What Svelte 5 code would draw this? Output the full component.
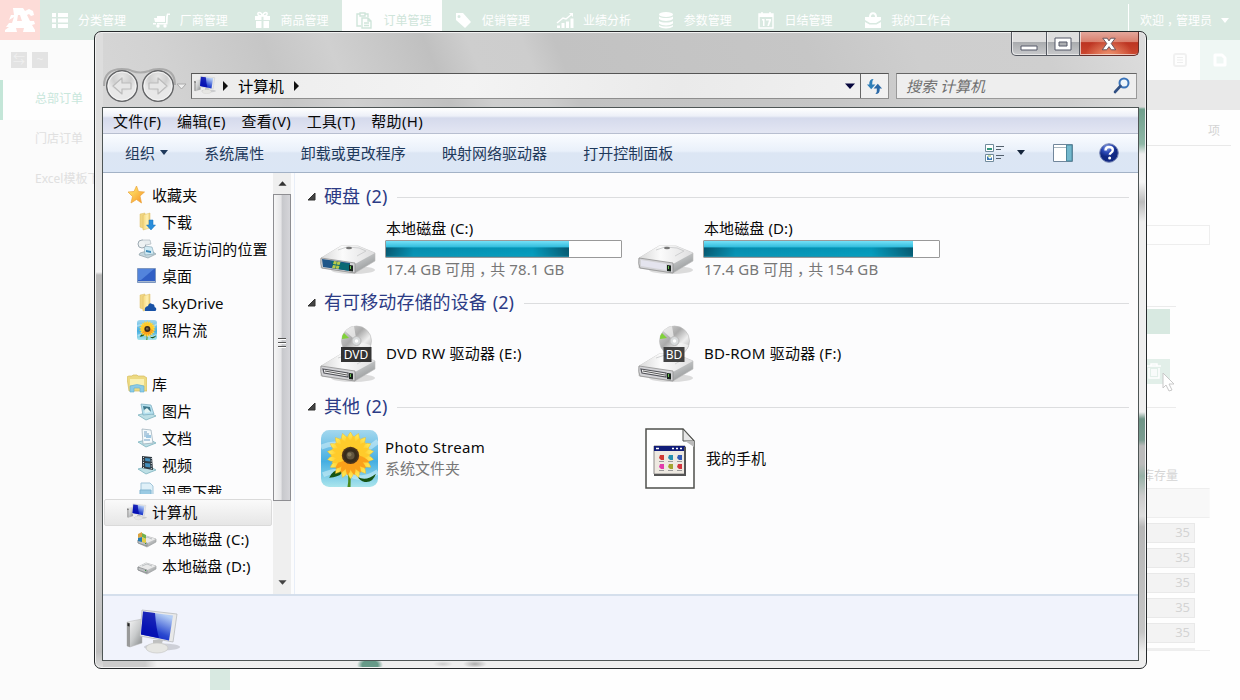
<script>
  const nav = [
    { label: '分类管理', icon: 'list' },
    { label: '厂商管理', icon: 'cart' },
    { label: '商品管理', icon: 'gift' },
    { label: '订单管理', icon: 'paste', active: true },
    { label: '促销管理', icon: 'tag' },
    { label: '业绩分析', icon: 'chart' },
    { label: '参数管理', icon: 'data' },
    { label: '日结管理', icon: 'cal' },
    { label: '我的工作台', icon: 'case', wide: true }
  ];
  const menus = ['文件(F)', '编辑(E)', '查看(V)', '工具(T)', '帮助(H)'];
  const tools = ['系统属性', '卸载或更改程序', '映射网络驱动器', '打开控制面板'];
  const tree = [
    { label: '收藏夹', icon: 'star', root: true },
    { label: '下载', icon: 'download' },
    { label: '最近访问的位置', icon: 'recent' },
    { label: '桌面', icon: 'desktop' },
    { label: 'SkyDrive', icon: 'sky' },
    { label: '照片流', icon: 'flower' },
    { label: '', icon: '' },
    { label: '库', icon: 'library', root: true },
    { label: '图片', icon: 'pictures' },
    { label: '文档', icon: 'docs' },
    { label: '视频', icon: 'video' },
    { label: '迅雷下载', icon: 'thunder' }
  ];
  const lower = [
    { label: '本地磁盘 (C:)', icon: 'diskc' },
    { label: '本地磁盘 (D:)', icon: 'diskd' }
  ];
  const petals = Array.from({ length: 18 }, (_, i) => i * 20);
  const qty = [35, 35, 35, 35, 35];
</script>

{#snippet navIcon(name)}
  <svg class="nav-icon" width="18" height="18" viewBox="0 0 18 18" fill="currentColor">
    {#if name === 'list'}
      <path d="M1 2h4v4H1zM7 2h10v4H7zM1 7.500h4v4H1zM7 7.500h10v4H7zM1 13h4v4H1zM7 13h10v4H7z" />
    {:else if name === 'cart'}
      <path d="M17 2.500h-3L13 6v6H3v1.500h11.500L15 4h2zM4 5h8v6H4zM1 7h3v4H2zM0 12h4v1.500H0z" /><circle cx="5" cy="15" r="1.700" /><circle cx="12" cy="15" r="1.700" />
    {:else if name === 'gift'}
      <path d="M1 5h6.500v4H1zM9.500 5H16v4H9.500zM2 10h5.500v7H2zM9.500 10H15v7H9.500z" /><path d="M8.500 5C7 0 3 1 4 3.500 4.500 5 7 5 8.500 5c1.500 0 4 0 4.500-1.500C14 1 10 0 8.500 5" fill="none" stroke="currentColor" stroke-width="1.500" />
    {:else if name === 'paste'}
      <path d="M6 15H2V3h3m5 0h3v3M5 2h5v3H5zM7 7h6l3 3v7H7zM13 7v3h3M9 12h5M9 14.500h5" fill="none" stroke="currentColor" stroke-width="1.400" />
    {:else if name === 'tag'}
      <path fill-rule="evenodd" d="M1 2v7l9 8 6-6L8 2zM4 4a1.500 1.500 0 1 1 0 3 1.500 1.500 0 0 1 0-3z" />
    {:else if name === 'chart'}
      <path d="M1 14.500h3V17H1zM5.500 12h3v5h-3zM10 10.500h3V17h-3zM14.500 7.500h3V17h-3z" /><path d="M1 12l6-5 3 1 6-5" fill="none" stroke="currentColor" stroke-width="1.500" /><path d="M13 2h4v4z" />
    {:else if name === 'data'}
      <ellipse cx="9" cy="3.500" rx="7" ry="2.500" /><path d="M2 5.500c3 2 11 2 14 0v2.500c-3 2.500-11 2.500-14 0zM2 10c3 2 11 2 14 0v2.500c-3 2.500-11 2.500-14 0zM2 14c3 2 11 2 14 0v1.500c-3 2.500-11 2.500-14 0z" />
    {:else if name === 'cal'}
      <path d="M2 3h14v14H2zM5 1v4M13 1v4" fill="none" stroke="currentColor" stroke-width="1.400" /><path d="M2 3h14v3H2zM5 8h2.500v7H6v-5.500H5zM9 8h5v1.500L12 15h-1.700L12 9.500H9z" />
    {:else}
      <path d="M1 6h16v3l-5 3H6L1 9zM1 11l4.500 2.500h7L17 11v6H1z" /><path d="M6 6c0-5 6-5 6 0" fill="none" stroke="currentColor" stroke-width="2" />
    {/if}
  </svg>
{/snippet}

{#snippet flower(size)}
  <svg width={size} height={size} viewBox="0 0 56 56">
    <rect width="56" height="56" rx="8" fill="url(#sky)" />
    <path d="M0 17Q15 10 27 18T56 11M2 44q15-7 27 0t27-3" fill="none" stroke="#d9f3fa" stroke-width="5" opacity=".5" />
    <path d="M25 38q3 9 1 18h3q1-10-1-19z" fill="#4b8a1d" />
    <path d="M21 38q-10 1-13 9 9-1 12-4zM36 46q8 5 18-3-3 9-11 8-5-1-7-5z" fill="#165414" />
    <g transform="translate(29 25)">
      {#each petals as a}
        <path transform="rotate({a})" d="M-3-7Q-5-18 0-23 4-18 4-7z" fill="url(#petal)" stroke="#f3b21c" stroke-width=".4" />
      {/each}
      {#each petals as a}
        <path transform="rotate({a + 9}) scale(.86)" d="M-3-7Q-4-17 0-23 4-17 4-7z" fill={a > 90 && a < 240 ? '#fba01a' : '#ffcb2b'} />
      {/each}
      <circle r="8.500" fill="#51351b" /><circle r="7" fill="#382d1c" /><circle r="4" fill="#625640" /><circle cx="-1" cy="-1" r="2" fill="#857959" />
    </g>
  </svg>
{/snippet}

{#snippet computer(w, h)}
  <svg width={w} height={h} viewBox="0 0 54 46">
    <ellipse cx="36" cy="38" rx="18" ry="3.500" fill="#8d9096" opacity=".35" />
    <path d="M1 13l15-3v24L4 38l-3-1z" fill="url(#silver)" stroke="#b7b7b7" stroke-width=".5" />
    <path d="M1 13l3 1v24l-3-1z" fill="#9a9a9a" /><path d="M1.500 14l2 .5v3l-2-.5z" fill="#222" />
    <path d="M27 31h10l-2 7h-8z" fill="#bfc0c0" />
    <ellipse cx="31" cy="39" rx="11" ry="5" fill="#e6e6e3" stroke="#c7c7c4" stroke-width=".7" />
    <path d="M16 1l35 4-4 28-33-6z" fill="#e9e9e9" stroke="#b9bbbe" stroke-width=".8" />
    <path d="M17 2.500l30 4-4 25-28-6z" fill="url(#screen)" />
    <path d="M17 2.500l12 1.600q1 15 4 25L15 25.500z" fill="#0008ad" opacity=".8" />
  </svg>
{/snippet}

{#snippet drive(kind)}
  <svg width="58" height="62" viewBox="0 0 58 62">
    <ellipse cx="34" cy="55" rx="22" ry="4" fill="#777" opacity=".25" />
    {#if kind === 'DVD' || kind === 'BD'}
      <circle cx="37.500" cy="18" r="15" fill="url(#disc)" stroke="#bbb" stroke-width=".6" />
      <path d="M37.500 18L26 8q4-4 9-5zM37.500 18l14 4q-2 6-6 8z" fill="#f5f5f5" opacity=".7" />
      <path d="M30 15l-7 1q0-4 2-6z" fill="#80d239" />
      <circle cx="37.500" cy="18" r="4.500" fill="#d9dcdd" stroke="#bbb" /><circle cx="37.500" cy="18" r="1.800" fill="#fff" />
    {/if}
    <path d="M2 43l20-12h17l17 7v8L36 58 2 53z" fill="url(#silver)" stroke="#bcbcbc" stroke-width=".6" />
    <path d="M2 43l20-12h17l17 7-20 11z" fill="url(#toplight)" />
    <path d="M19 35l9-3 12 1 7 3-9 5" fill="none" stroke="#c7c8c9" stroke-width=".8" /><ellipse cx="30" cy="33" rx="3" ry="1.200" fill="#777" />
    <path d="M2 43l34 5v10L3 53q-2-4-1-10z" fill="#d3d3d6" stroke="#909090" stroke-width=".8" />
    {#if kind === 'C'}
      <path d="M3 44l28 4v8L4 52z" fill="#205688" /><path d="M12 46l19 3v7l-17-3z" fill="#0a6974" /><path d="M15 46l3 .5-1 3-3-.5zM18.500 46.500l3 .5-1 3-3-.5zM14 50l3 .5-1 3-3-.5zM17.500 50.500l3 .5-1 3-3-.5z" fill="#b9cb4a" />
    {:else if kind === 'D'}
      <path d="M4 45l25 4v6L4 51z" fill="#e4e4ee" />
    {:else}
      <path d="M4 46l25 4v4L5 50z" fill="#f5f5f5" stroke="#53545a" stroke-width="1.200" /><path d="M6 48l22 4" stroke="#555" />
    {/if}
    <path d="M30 50l4 .5v6l-4-.5z" fill="#18221c" /><path d="M31.500 51v3" stroke="#63bc4d" />
    {#if kind === 'DVD'}
      <rect x="22" y="24" width="30.500" height="15" fill="#252525" opacity=".93" /><text x="37" y="36" text-anchor="middle" font-size="12" fill="#fff">DVD</text>
    {:else if kind === 'BD'}
      <rect x="26.500" y="24" width="21" height="15" fill="#353535" opacity=".93" /><text x="37" y="36" text-anchor="middle" font-size="12" fill="#fff">BD</text>
    {/if}
  </svg>
{/snippet}

{#snippet treeIcon(name)}
  {#if name === 'flower'}
    {@render flower(20)}
  {:else if name}
    <svg width="20" height="20" viewBox="0 0 20 20">
      {#if name === 'star'}
        <path d="M9.500 1l2 5.500 6 .5-4.500 4 1.500 7-5-3.500L4 18l1.500-6.500L1 7l6-.5z" fill="url(#gold)" stroke="#eba33b" stroke-width=".7" />
      {:else if name === 'download' || name === 'sky'}
        <path d="M3 2l5-1v16l-5-2z" fill="#f0d581" stroke="#dcbf66" stroke-width=".5" /><path d="M6 3l7-2v15l-7 2z" fill="url(#folder)" stroke="#dcbf66" stroke-width=".5" />
        {#if name === 'download'}<path d="M12 8h4v5h2.500l-4.500 5-4.500-5H12z" fill="#298ddb" stroke="#1673b8" stroke-width=".5" />
        {:else}<path d="M8 18q-1-4 3-5 1-4 4-2 3 0 2.500 3 3 1 1 4z" fill="#1952a6" />{/if}
      {:else if name === 'recent'}
        <path d="M3 14l10-3 6 4-8 4-9-3z" fill="#c4d5dc" stroke="#82939c" stroke-width=".6" /><path d="M7 7l8 1 2 7-9 1z" fill="#d1eaf3" stroke="#809faf" stroke-width=".6" /><circle cx="5" cy="5" r="4" fill="#eef2f3" stroke="#9ca9b2" /><path d="M5 1h8l1 4-5 1" fill="#e8edef" stroke="#95a3aa" stroke-width=".5" /><path d="M9 11l5 1v2l-5-1z" fill="#3c89b9" />
      {:else if name === 'desktop'}
        <path d="M.5 2.500h18v14H.5z" fill="#315fc5" stroke="#7590b7" stroke-width=".8" /><path d="M1 3h16L4 14H1z" fill="#6698e8" opacity=".65" /><path d="M1 15h17v1H1z" fill="#a8b9d0" />
      {:else if name === 'library'}
        <path d="M0 4q0-2 2-2h3l1-1h4l1 1h6l3 2v13H2z" fill="#edda83" stroke="#d5ba5b" stroke-width=".7" /><path d="M3 5h14v6H3z" fill="#faf1b3" /><path d="M3 12q7-3 14 0v6h-4v-4H7v4H3z" fill="#8ccae6" stroke="#60afd2" stroke-width=".6" />
      {:else if name === 'diskc' || name === 'diskd'}
        <path d="M1 11l8-4 10 3v3l-9 5-9-4z" fill="url(#silver)" stroke="#a0a3a5" stroke-width=".7" /><path d="M1 11l8-4 10 3-9 4z" fill="#e9e9e9" /><path d="M1 11l9 3v3l-9-3z" fill="#bec0c1" stroke="#777b7d" stroke-width=".6" /><path d="M5 10l5-2 5 2" fill="none" stroke="#bdc1c3" /><path d="M8 14l1 .3v1l-1-.3z" fill="#2a8b36" />
        {#if name === 'diskc'}<path d="M1 5l4-2v5l-4 1z" fill="#dba33e" /><path d="M5 4l4 2v4L5 8z" fill="#72b14d" /><path d="M1 9l4-1v5l-4-1z" fill="#267bae" /><path d="M5 8l4 2v4l-4-1z" fill="#e2cc47" />{/if}
      {:else if name === 'thunder'}
        <path d="M4 1h9l3 3v15H4z" fill="#dff0f8" stroke="#a1c5d9" /><path d="M3 8h11v11H3z" fill="#9acae3" stroke="#80b4d0" /><path d="M6 13h8v6H6z" fill="#b6dded" />
      {:else}
        <path d="M1 14l11-3 7 4-10 4z" fill="#bddfe5" stroke="#70abb7" stroke-width=".7" />
        {#if name === 'pictures'}
          <path d="M4 3l10 1 3 9-11 1z" fill="#b6e1ef" stroke="#79a9bb" stroke-width=".7" /><path d="M6 5l7 1 1 5-7-1z" fill="#3d788c" /><path d="M7 9l3-2 4 4-6 1z" fill="#e1f4f4" />
        {:else if name === 'docs'}
          <path d="M5 1l9 1 2 13-10 1z" fill="#f5fafc" stroke="#95a9b4" stroke-width=".7" /><path d="M7 4h3M7 6h5M7 8h2M7 12h6" stroke="#70a0c4" /><path d="M9 7h5v3H9z" fill="#9dc6e1" />
        {:else}
          <path d="M5 1l10 1 1 13-11-2z" fill="#303b43" /><path d="M8 3l5 .5.3 3-5-.5zM8 8l5 .5.3 4-5-.7z" fill="#438ebb" /><path d="M6.500 2v11M14.300 3v11" stroke="#d5dce0" stroke-dasharray="1 1.500" />
        {/if}
      {/if}
    </svg>
  {/if}
{/snippet}

{#snippet heading(text)}
  <div class="heading"><svg width="9" height="9" viewBox="0 0 9 9"><path d="M8 1v7H1z" fill="#444" stroke="#303030" /></svg><span>{text}</span><i></i></div>
{/snippet}

<svg class="defs" width="0" height="0">
  <defs>
    <linearGradient id="silver" x1="0" y1="0" x2="1" y2="1"><stop stop-color="#fafafa" /><stop offset=".55" stop-color="#c9cbcc" /><stop offset="1" stop-color="#858889" /></linearGradient>
    <linearGradient id="toplight"><stop stop-color="#d8d8d8" /><stop offset=".4" stop-color="#fbfbfb" /><stop offset="1" stop-color="#dededf" /></linearGradient>
    <linearGradient id="disc" x1="0" y1="0" x2="1" y2="1"><stop stop-color="#ddd" /><stop offset=".4" stop-color="#aaa" /><stop offset=".65" stop-color="#eee" /><stop offset="1" stop-color="#a0a0a0" /></linearGradient>
    <linearGradient id="screen" x1="0" y1="1" x2=".5" y2="0"><stop stop-color="#000fc0" /><stop offset=".45" stop-color="#2a49d0" /><stop offset="1" stop-color="#b4cdf5" /></linearGradient>
    <linearGradient id="sky" x1="0" y1="0" x2="0" y2="1"><stop stop-color="#a4d8ee" /><stop offset=".55" stop-color="#45aee2" /><stop offset="1" stop-color="#aae5ec" /></linearGradient>
    <linearGradient id="petal" x1="0" y1="0" x2="0" y2="1"><stop stop-color="#fff15a" /><stop offset="1" stop-color="#ffad16" /></linearGradient>
    <linearGradient id="gold" x1="0" y1="0" x2="1" y2="1"><stop stop-color="#fff477" /><stop offset="1" stop-color="#f88e21" /></linearGradient>
    <linearGradient id="folder"><stop stop-color="#f5d77c" /><stop offset=".6" stop-color="#fff1b2" /><stop offset="1" stop-color="#ebcd78" /></linearGradient>
    <radialGradient id="help" cx=".4" cy=".2"><stop stop-color="#8fa5e4" /><stop offset=".55" stop-color="#2d4bb8" /><stop offset="1" stop-color="#102883" /></radialGradient>
    <radialGradient id="orb" cx=".5" cy=".2"><stop stop-color="#e6e6e6" /><stop offset=".6" stop-color="#cfcfcf" /><stop offset="1" stop-color="#e8e8e8" /></radialGradient>
  </defs>
</svg>

<div class="page">
  <header class="topnav">
    <div class="logo"><svg width="30" height="26" viewBox="0 0 30 26"><path fill="#fff" fill-rule="evenodd" d="M8 1h10l2 3 4-2 4 2 1 4-3 1-2-2-2 1 3 6h4l1 3-3 1 3 5v2H18l1-4h-8l1 4H0v-2l4-3H1l3-4h3l2-6-5 3 2-5h3zM13 8l-1 6h5l-2-6z" /></svg></div>
    {#each nav as item}
      <div class="nav-item" class:active={item.active} class:wide={item.wide}>{@render navIcon(item.icon)}<span>{item.label}</span></div>
    {/each}
    <div class="welcome"><span>欢迎<em>，</em>管理员</span><i></i></div>
  </header>
  <div class="page-body">
    <aside class="page-side">
      <div class="mini"><b>⇆</b><b>~</b></div>
      <div class="side-link current">总部订单</div>
      <div class="side-link">门店订单</div>
      <div class="side-link">Excel模板下载</div>
    </aside>
    <main class="page-main">
      <div class="tiles">
        <div><svg width="14" height="14" viewBox="0 0 14 14"><rect x="1" y="1" width="12" height="12" rx="2" fill="none" stroke="#f1f1f1" stroke-width="2" /><path d="M4 4.500h6M4 7h6M4 9.500h6" stroke="#eee" /></svg></div>
        <div class="tint"><svg width="14" height="14" viewBox="0 0 14 14"><path d="M2 2h7l3 3v7H2z" fill="none" stroke="#fff" stroke-width="3" stroke-linejoin="round" /></svg></div>
      </div>
      <div class="grey-band"></div>
      <div class="col-title">项</div>
      <div class="field"></div>
      <div class="order-table">
        <div class="green-head"></div>
        <div class="trash"><svg width="16" height="18" viewBox="0 0 16 18" fill="none" stroke="#fff" stroke-width="1.500"><path d="M1 4h14M5 4V2h6v2M3 6v10h10V6M6 7v7M8 7v7M10 7v7" /></svg></div>
      </div>
      <div class="stock-title">库存量</div>
      <div class="stock-head"></div>
      <div class="stock">{#each qty as q}<div>{q}</div>{/each}<em></em></div>
      <div class="page-foot"><b></b></div>
    </main>
  </div>
</div>

<svg class="cursor" width="14" height="20" viewBox="0 0 14 20"><path d="M1 1v15l3-3 3 6 3-1-3-6h5z" fill="#fff" stroke="#c8c8c8" /></svg>

<section class="window">
  <div class="titlebar">
    <div class="captions">
      <div class="cap min"><svg width="18" height="6" viewBox="0 0 18 6"><path d="M1 1h16v4H1z" fill="#fff" stroke="#555968" /></svg></div>
      <div class="cap max"><svg width="18" height="14" viewBox="0 0 18 14"><path fill-rule="evenodd" d="M1 1h16v12H1zM5 5v4h8V5z" fill="#fff" stroke="#555968" /></svg></div>
      <div class="cap close"><svg width="16" height="14" viewBox="0 0 18 15"><path d="M2 1h5l2 3 2-3h5l-4.500 6 5 7h-5L9 10.500 6.500 14h-5l5-7z" fill="#fff" stroke="#5d4a53" /></svg></div>
    </div>
    <div class="addressbar">
      <svg class="orbs" width="88" height="38" viewBox="0 0 88 38">
        <path d="M1 19Q1 2 19 2q7 0 10 2 8 3 17 0 4-2 10-2 16 0 16 16" fill="none" stroke="#aaa" stroke-width="2" />
        {#each [19, 55] as cx}<circle {cx} cy="19" r="15.300" fill="url(#orb)" stroke="#656668" stroke-width="1.500" /><circle {cx} cy="19" r="14" fill="none" stroke="#f4f4f4" />{/each}
        <path d="M10 19l9-8v5h9v6h-9v5zM64 19l-9-8v5h-9v6h9v5z" fill="#e6e6e6" stroke="#bcbcbc" stroke-width="1.200" stroke-linejoin="round" />
        <path d="M74 17h9l-4.500 5z" fill="#eee" stroke="#aaa" />
      </svg>
      <div class="address">
        {@render computer(22, 20)}
        <svg width="7" height="10" viewBox="0 0 7 10"><path d="M1 0l5 5-5 5z" fill="#111" /></svg>
        <span>计算机</span>
        <svg width="7" height="10" viewBox="0 0 7 10"><path d="M1 0l5 5-5 5z" fill="#111" /></svg>
        <svg class="dd" width="10" height="6" viewBox="0 0 10 6"><path d="M0 .5h10L5 6z" fill="#07073d" /></svg>
        <div class="refresh"><svg width="17" height="17" viewBox="0 0 18 18" fill="#2f7fb8"><path d="M8 1Q3 1 3.500 7H1l4.500 5L10 7H6.500Q6 3 8 1z" /><path d="M10 17q5 0 4.500-6H17l-4.500-5L8 11h3.500q.5 4-1.500 6z" fill="#2a68a6" /></svg></div>
      </div>
      <div class="search"><span>搜索 计算机</span><svg width="18" height="17" viewBox="0 0 18 17"><circle cx="11" cy="6" r="4.500" fill="#edf5fb" stroke="#3973b9" stroke-width="2" /><path d="M7.500 9L2 15" stroke="#304f83" stroke-width="2.600" stroke-linecap="round" /></svg></div>
    </div>
  </div>

  <div class="client">
    <div class="menubar">{#each menus as m}<span>{m}</span>{/each}</div>
    <div class="toolbar">
      <span class="org">组织<svg width="8" height="5" viewBox="0 0 8 5"><path d="M0 0h8L4 5z" fill="#1e395b" /></svg></span>
      {#each tools as t}<span>{t}</span>{/each}
      <div class="tool-icons">
        <svg width="21" height="20" viewBox="0 0 21 20"><path d="M1.500 1.500h8v7h-8zM1.500 11.500h8v7h-8z" fill="#fff" stroke="#718b9c" /><path d="M3 6h5" stroke="#33977d" stroke-width="2" /><path d="M3 13l3 3 2-2v3H3z" fill="#3979b5" /><path d="M4 13h3" stroke="#86b348" /><path d="M12 3.500h8M12 6.500h5M12 12.500h8M12 15.500h5" stroke="#53606d" /></svg>
        <svg width="8" height="5" viewBox="0 0 8 5"><path d="M0 0h8L4 5z" fill="#15253b" /></svg>
        <svg width="20" height="18" viewBox="0 0 20 18"><path d="M.5.5h19v17H.5z" fill="#fff" stroke="#71869b" /><path d="M1 3.500h12" stroke="#a8b6c0" /><path d="M13.500 1h5.500v16h-5.500z" fill="#73b8cd" stroke="#4c879c" /></svg>
        <svg width="20" height="20" viewBox="0 0 20 20"><circle cx="10" cy="10" r="9.300" fill="url(#help)" stroke="#7a88b5" /><path d="M6.500 7.500q.2-3.500 3.500-3.500 3.800 0 3.800 3 0 2-2 3-1 .6-1 1.800" fill="none" stroke="#fff" stroke-width="2.400" /><circle cx="10.600" cy="15" r="1.500" fill="#fff" /></svg>
      </div>
    </div>
    <div class="work">
      <nav class="tree">
        <div class="tree-scroll">
          {#each tree as row}<div class="row" class:root={row.root}>{@render treeIcon(row.icon)}<span>{row.label}</span></div>{/each}
        </div>
        <div class="row root selected">{@render computer(20, 18)}<span>计算机</span></div>
        {#each lower as row}<div class="row">{@render treeIcon(row.icon)}<span>{row.label}</span></div>{/each}
      </nav>
      <div class="scrollbar">
        <svg width="9" height="5" viewBox="0 0 10 5"><path d="M5 0l4.500 5h-9z" fill="#333" /></svg>
        <div class="thumb"><i></i><i></i><i></i></div>
        <svg width="9" height="5" viewBox="0 0 10 5"><path d="M5 5L.5 0h9z" fill="#444" /></svg>
      </div>
      <div class="content">
        {@render heading('硬盘 (2)')}
        <div class="items disks">
          <div class="item">{@render drive('C')}<div class="disk-text"><span>本地磁盘 (C:)</span><div class="meter"><b style="width:78%"></b></div><small>17.4 GB 可用<em>，</em>共 78.1 GB</small></div></div>
          <div class="item">{@render drive('D')}<div class="disk-text"><span>本地磁盘 (D:)</span><div class="meter"><b style="width:89%"></b></div><small>17.4 GB 可用<em>，</em>共 154 GB</small></div></div>
        </div>
        {@render heading('有可移动存储的设备 (2)')}
        <div class="items drives">
          <div class="item">{@render drive('DVD')}<span>DVD RW 驱动器 (E:)</span></div>
          <div class="item">{@render drive('BD')}<span>BD-ROM 驱动器 (F:)</span></div>
        </div>
        {@render heading('其他 (2)')}
        <div class="items others">
          <div class="item photo">{@render flower(57)}<div class="photo-text"><span>Photo Stream</span><small>系统文件夹</small></div></div>
          <div class="item phone">
            <svg width="50" height="61" viewBox="0 0 50 61">
              <path d="M1 1h37l11 12v47H1z" fill="#fff" stroke="#4f504c" stroke-width="1.500" /><path d="M38 1v12h11z" fill="#e7e7e7" stroke="#4f504c" /><path d="M40 13h9v6z" fill="#bbb" />
              <path d="M9 18h31v28H9z" fill="#eee9e1" stroke="#8b8988" /><path d="M9 18h31v5H9z" fill="#111d79" /><path d="M11 20.500h3M27 20.500h2M31 20.500h2M35 20.500h2" stroke="#fff" stroke-width="1.500" /><path d="M40 19v28H9" fill="none" stroke="#555" stroke-width="2" />
              {#each ['#cf3934', '#248fb0', '#3259b5', '#e13aac', '#a3a42e', '#d4363f'] as c, i}
                <path d="M0 0h4v5H1L-1 3z" transform="translate({15 + (i % 3) * 9} {27 + Math.floor(i / 3) * 9})" fill={c} /><path d="M-1 6.500h5" transform="translate({15 + (i % 3) * 9} {27 + Math.floor(i / 3) * 9})" stroke="#999" />
              {/each}
            </svg><span>我的手机</span>
          </div>
        </div>
      </div>
    </div>
    <footer class="details">{@render computer(54, 46)}</footer>
  </div>
</section>

<style>
  :global(body) { background: #fefefe; font-family: 'Noto Sans', 'Noto Sans CJK SC', sans-serif; overflow: hidden; }
  svg { display: block; flex: none; }
  .defs { position: absolute; }
  .page { height: 700px; display: flex; flex-direction: column; overflow: hidden; font-size: 12px; }
  .topnav { height: 40px; flex: none; display: flex; background: #d9e9e1; color: #fff; }
  .logo { width: 40px; background: #fddcd8; display: flex; align-items: center; justify-content: center; }
  .nav-item { width: 100.800px; box-sizing: border-box; padding-left: 12px; display: flex; align-items: center; gap: 9px; white-space: nowrap; }
  .nav-item:nth-child(2) { padding-left: 11px; }
  .nav-item.wide { padding-left: 18px; }
  .nav-item.active { background: #fefefe; color: #cfe5da; padding-left: 13px; gap: 10px; width: 99.700px; margin-right: 1px; }
  em { font-style: normal; }
  .welcome em, small em { display: inline-block; text-indent: .25em; width: 1em; white-space: nowrap; }
  .welcome { margin: 4px 0 4px auto; border-left: 1px solid #fff; width: 112px; box-sizing: border-box; padding-left: 11px; display: flex; align-items: center; justify-content: space-between; padding-right: 11px; }
  .welcome i { border: 4px solid transparent; border-top: 5px solid #fff; border-bottom: 0; }
  .page-body { flex: 1; display: flex; min-height: 0; }
  .page-side { width: 200px; background: #fbfbfb; color: #e0e0e0; }
  .mini { height: 40px; box-sizing: border-box; padding: 12px 11px; display: flex; gap: 5px; }
  .mini b { width: 16px; height: 16px; background: #e3e3e3; color: #efefef; line-height: 15px; text-align: center; font-weight: normal; }
  .side-link { height: 40px; line-height: 38px; padding-left: 35px; }
  .side-link.current { background: #fefefe; color: #c9e7dc; padding-left: 32px; border-left: 3px solid #c4e6d8; }
  .page-main { flex: 1; display: flex; flex-direction: column; align-items: flex-end; color: #d4d4d4; }
  .tiles { display: flex; height: 40px; flex: none; }
  .tiles div { width: 40px; display: flex; align-items: center; justify-content: center; }
  .tiles .tint { background: #eff7f4; }
  .grey-band { width: 100%; height: 30px; flex: none; background: #e9e9e9; }
  .col-title { width: 970px; height: 35px; flex: none; margin-right: 9px; border-bottom: 1px solid #e9e9e9; line-height: 41px; text-align: right; padding-right: 11px; }
  .field { width: 400px; height: 18px; border: 1px solid #eee; margin: 79px 30px 0 0; flex: none; }
  .order-table { width: 500px; height: 100px; border: 1px solid #ebebeb; border-width: 1px 0; margin: 61px 64px 0 0; flex: none; display: flex; flex-direction: column; align-items: flex-end; }
  .green-head { width: 494px; height: 25px; background: #d8e9e1; margin: 2px 6px 0 0; }
  .trash { width: 28px; height: 25px; margin: 25px 6px 0 0; background: #e2efe9; display: flex; align-items: center; }
  .trash svg { margin: 0 0 2px 4px; }
  .stock-title { height: 30px; line-height: 30px; margin: 53px 62px 0 0; flex: none; }
  .stock-head { width: 500px; height: 28px; background: #f8f8f8; border: 1px solid #eee; border-right-color: #fafafa; margin: -3px 30px 5px 0; flex: none; }
  .stock { width: 500px; border-bottom: 1px solid #eee; margin-right: 30px; height: 127px; flex: none; display: flex; flex-direction: column; gap: 5px; align-items: flex-end; }
  .stock div { width: 467px; flex: none; height: 20px; line-height: 17px; border: 1px solid #e9e9e9; background: #f3f3f3; margin-right: 15px; padding-right: 4px; box-sizing: border-box; text-align: right; font-size: 13px; }
  .stock em { width: 467px; height: 2px; background: #efefef; margin-right: 15px; }
  .page-foot { width: 1030px; }
  .page-foot b { display: block; width: 20px; height: 39px; background: #d8e9e1; }
  .cursor { position: absolute; left: 1162px; top: 372px; }

  .window { position: absolute; left: 94px; top: 31px; width: 1053px; height: 638px; box-sizing: border-box; border: 1px solid #25292b; border-radius: 7px; padding: 0 7px 7px; box-shadow: inset 0 0 0 1px #f2f2f2; display: flex; flex-direction: column;
    background:
      radial-gradient(ellipse 13px 8px at 275px 633px, #669a88 60%, transparent),
      radial-gradient(ellipse 12px 4px at 380px 632px, #aaa, transparent),
      radial-gradient(ellipse 10px 3px at 348px 632px, #ccc, transparent),
      linear-gradient(180deg, transparent 75px, #709f8c 77px, #8fb7a6 112px, #eee 122px, #f5f5f5 150px, #bbb 170px, #eee 190px, #eee 380px, #6e9486 387px, #7b9c90 408px, #bbb 414px, #bbb 432px, #96b1a6 444px, #ccc 464px, #ddd 484px, #b6b6b6 495px, #c5c5c5 600px, #eee 620px) right / 8px 100% no-repeat,
      linear-gradient(180deg, #ddd 0 75px, #e4e4e4 160px, #f2f2f2 240px, #b9b9b9 243px, #cfcfcf 340px, #b8b8b8 390px, #d0d0d0 500px, #bdbdbd 620px, #ddd) left / 8px 100% no-repeat,
      linear-gradient(90deg, #ccc 50px, #f1f1f1 62px, #eee 230px, #eee) bottom / 100% 9px no-repeat,
      linear-gradient(68deg, #d7d7d7 0, #d2d2d2 8%, #c6c6c6 18%, #d0d0d0 24%, #c0c0c0 33%, #cecece 37%, #cdcdcd 42%, #c2c2c2 45%, #c6c6c6 68%, #cecece 78%, #cfcfcf 90%, #ddd 100%) top / 100% 76px no-repeat, #e7e7e7; }
  .titlebar { height: 75px; flex: none; display: flex; flex-direction: column; }
  .captions { height: 25px; flex: none; display: flex; justify-content: flex-end; }
  .cap { height: 24px; box-sizing: border-box; border: 1px solid #555961; border-top: 0; border-left-width: 0; display: flex; align-items: center; justify-content: center; box-shadow: inset 1px -1px 0 #f6f6f6aa; background: linear-gradient(#dedede 0 42%, #a9abae 45%, #c9cacc); }
  .min { width: 36px; border-left-width: 1px; border-radius: 0 0 0 5px; padding-top: 9px; }
  .max { width: 33px; }
  .close { width: 59px; border-radius: 0 0 5px 0; border-color: #642d29; background: radial-gradient(ellipse at 50% 120%, #f4a37c 0, transparent 60%), linear-gradient(#e4a79b, #d97f6d 43%, #bc3422 46%, #cc4830); }
  .addressbar { flex: 1; display: flex; padding-top: 11px; align-items: flex-start; padding-left: 1px; }
  .orbs { margin-top: -1px; }
  .address { height: 26px; width: 698px; box-sizing: border-box; border: 1px solid #8e8e8e; border-top-color: #555; border-left-color: #666; background: linear-gradient(100deg, #ececec, #f3f3f3 40%, #eaeaea 70%, #f1f1f1); display: flex; align-items: center; font-size: 15.300px; margin-top: 5px; padding-left: 2px; }
  .address > svg:nth-of-type(1) { margin-bottom: 3px; }
  .address > svg:nth-of-type(2) { margin-left: 6px; }
  .address span { margin: 0 9px 3px; }
  .dd { margin-left: auto; margin-right: 5px; }
  .refresh { width: 27px; height: 24px; border-left: 1px solid #666; display: flex; align-items: center; justify-content: center; }
  .search { margin: 5px 2px 0 7px; flex: 1; height: 26px; box-sizing: border-box; border: 1px solid #999; border-top-color: #666; background: #eee; display: flex; align-items: center; justify-content: space-between; padding: 0 5px 1px 9px; font-size: 15px; font-style: italic; color: #707070; }

  .client { flex: 1; min-height: 0; border: 1px solid #4e5555; display: flex; flex-direction: column; background: #fcfcfd; font-size: 15px; color: #090909; }
  .menubar { height: 25px; flex: none; border-bottom: 1px solid #b8bfd0; background: linear-gradient(#fff, #edf0f8 8px, #d5daec 10px, #e3e6f3); display: flex; align-items: center; padding-left: 10px; gap: 15.600px; }
  .menubar span { letter-spacing: .32px; white-space: nowrap; }
  .toolbar { height: 39px; box-sizing: border-box; padding-bottom: 2px; flex: none; border-bottom: 1px solid #a3b2c6; background: linear-gradient(#fafcff, #e9f0fa 45%, #dce6f4 50%, #dbe6f5); color: #1e395b; display: flex; align-items: center; padding-left: 22px; gap: 36.300px; }
  .org { display: flex; align-items: center; gap: 5px; }
  .tool-icons { margin-left: auto; padding: 1px 19px 0 0; display: flex; align-items: center; }
  .tool-icons svg:nth-child(2) { margin-left: 12px; }
  .tool-icons svg:nth-child(3) { margin-left: 28px; }
  .tool-icons svg:nth-child(4) { margin-left: 26px; }
  .work { flex: 1; min-height: 0; display: flex; }
  .tree { width: 170px; flex: none; padding-left: 1px; box-sizing: border-box; }
  .tree-scroll { height: 312px; overflow: hidden; padding-top: 9px; margin-bottom: 5px; }
  .row { height: 27px; box-sizing: border-box; display: flex; align-items: center; gap: 5px; padding: 0 0 2px 33px; white-space: nowrap; letter-spacing: .08px; }
  .row.root { padding-left: 23px; }
  .row.selected { border: 1px solid #dadada; border-radius: 2px; background: linear-gradient(#fafafa, #e6e6e6); padding-left: 22px; width: 168px; }
  .scrollbar { width: 18px; flex: none; background: #efefef; display: flex; flex-direction: column; align-items: center; padding: 8px 0 9px; box-sizing: border-box; margin-right: 3px; }
  .scrollbar > svg:last-child { margin-top: auto; }
  .thumb { width: 18px; height: 307px; box-sizing: border-box; margin-top: 8px; border: 1px solid #8e8e92; background: linear-gradient(90deg, #f6f6f6, #e5e5e7 45%, #c7c8cc 50%, #d5d5d9); display: flex; flex-direction: column; gap: 3px; align-items: center; justify-content: center; padding-bottom: 10px; }
  .thumb i { width: 8px; height: 1px; background: #555; box-shadow: 0 1px #fff; }
  .content { flex: 1; border-left: 1px solid #e8eef8; padding: 10px 9px 0 12px; }
  .heading { height: 26px; display: flex; align-items: center; color: #2c3b85; font-size: 18px; gap: 8px; white-space: nowrap; }
  .heading span { letter-spacing: .1px; margin-bottom: 2px; word-spacing: 1px; }
  .heading i { height: 1px; flex: 1; background: #dcdddf; margin: 2px 0 0 2px; }
  .items { display: flex; padding-left: 12px; }
  .item { width: 318px; flex: none; display: flex; align-items: center; gap: 9px; white-space: nowrap; }
  .disks { height: 80px; align-items: flex-start; }
  .disks .item { height: 66px; align-items: flex-start; }
  .disks .item > svg { margin-top: 6px; }
  .disk-text { display: flex; flex-direction: column; padding-top: 8px; }
  .disk-text span { line-height: 22px; letter-spacing: .1px; }
  .meter { width: 235px; height: 16px; border: 1px solid #9a9a9a; border-radius: 1px; background: #fff; margin-left: -1px; margin-top: 1px; }
  .meter b { display: block; height: 100%; background: linear-gradient(#75e1f8 0, #32bddd 37%, #0088aa55 43%, #06a2c255 90%, #2e8ba4), linear-gradient(90deg, #073d52, #078eaf 15%, #069cbd 80%, #073f52); }
  small { font-size: 15px; color: #777; line-height: 22px; }
  .disk-text small { letter-spacing: .1px; }
  .drives { height: 78px; align-items: center; padding-bottom: 1px; box-sizing: border-box; }
  .drives span { letter-spacing: .24px; margin-bottom: 2px; }
  .others { height: 78px; align-items: center; }
  .photo { gap: 7px; padding-left: 2px; width: 316px; }
  .photo-text { display: flex; flex-direction: column; }
  .photo-text span { line-height: 20px; letter-spacing: .33px; }
  .phone { padding: 0 0 0 8px; gap: 11px; }
  .phone span { margin-bottom: 2px; }
  .details { height: 66px; flex: none; border-top: 2px solid #d5dfec; background: #f1f3fc; display: flex; align-items: center; padding: 8px 0 0 23px; box-sizing: border-box; }
</style>
